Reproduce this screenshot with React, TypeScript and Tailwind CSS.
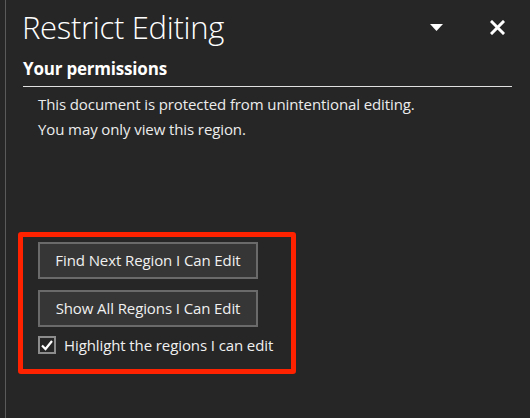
import React from "react";

export default function App() {
  return (
    <div
      className="w-[530px] h-[418px] bg-[#262626] flex pl-[5px] overflow-hidden"
      style={{ fontFamily: '"Open Sans", "Noto Sans", sans-serif' }}
    >
      <div className="flex-1 border-l border-[#5a5a5a] flex flex-col">
        {/* Header */}
        <div className="flex items-start pl-[16px] pr-[25px] pt-[7px] h-[58px]">
          <div className="text-[31px] leading-[40px] font-light text-white tracking-[-0.3px]">
            Restrict Editing
          </div>
          <div className="flex-1" />
          <svg width="13" height="7" viewBox="0 0 13 7" className="mt-[17px] mr-[47px]">
            <polygon points="0,0 13,0 6.5,7" fill="#ffffff" />
          </svg>
          <svg width="15" height="15" viewBox="0 0 15 15" className="mt-[13px]">
            <path d="M2 2 L13 13 M13 2 L2 13" stroke="#ffffff" strokeWidth="3" strokeLinecap="square" />
          </svg>
        </div>

        {/* Permissions */}
        <div className="pl-[17px] pr-[18px]">
          <div className="text-[17px] leading-[22px] font-bold text-white border-b border-[#e0e0e0] pb-[6px] tracking-[-0.2px]">
            Your permissions
          </div>
          <div className="pl-[15px] pt-[5px] text-[15px] leading-[25px] text-[#ececec] tracking-[-0.1px]">
            <div>This document is protected from unintentional editing.</div>
            <div>You may only view this region.</div>
          </div>
        </div>

        {/* Red annotated area */}
        <div className="ml-[12px] mt-[90px] w-[278px] h-[142px] border-[5px] border-[#ff2200] rounded-[3px] pl-[15px] pt-[5px] flex flex-col">
          <button className="w-[220px] h-[37px] bg-[#363636] border-2 border-[#6a6a6a] text-[15px] text-[#f0f0f0] tracking-[-0.1px]">
            Find Next Region I Can Edit
          </button>
          <button className="mt-[11px] w-[220px] h-[37px] bg-[#363636] border-2 border-[#6a6a6a] text-[15px] text-[#f0f0f0] tracking-[-0.1px]">
            Show All Regions I Can Edit
          </button>
          <div className="mt-[7px] flex items-center">
            <div className="w-[18px] h-[18px] border-2 border-[#8c8c8c] flex items-center justify-center">
              <svg width="14" height="14" viewBox="0 0 14 14">
                <path d="M2 7.5 L5.5 11 L12 3" stroke="#ffffff" strokeWidth="2.2" fill="none" />
              </svg>
            </div>
            <span className="ml-[8px] text-[15px] text-[#f0f0f0] tracking-[-0.1px]">
              Highlight the regions I can edit
            </span>
          </div>
        </div>
      </div>
    </div>
  );
}
